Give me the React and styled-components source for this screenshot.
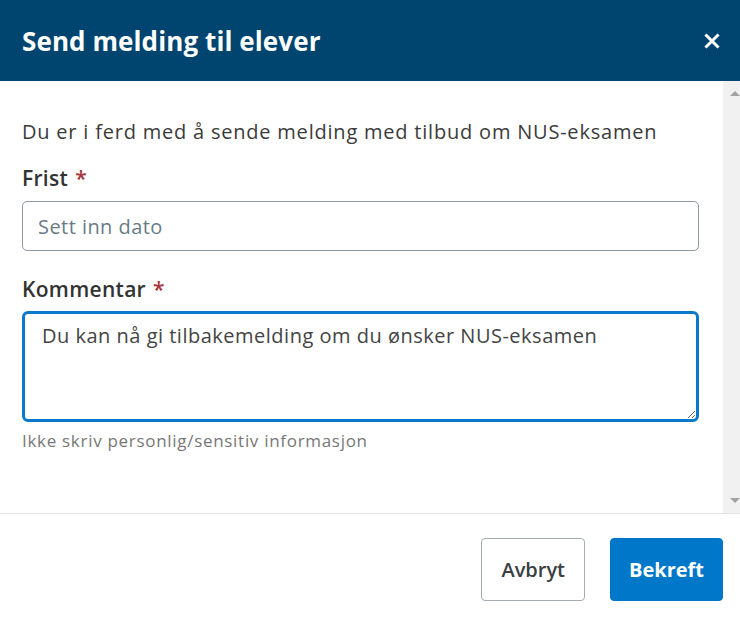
import styled, { createGlobalStyle } from 'styled-components';

const GlobalStyle = createGlobalStyle`
    html, body {
        margin: 0;
        padding: 0;
        height: 100%;
        background: #ffffff;
    }
    #root {
        height: 100%;
    }
    * {
        box-sizing: border-box;
    }
`;

const Dialog = styled.div`
    display: flex;
    flex-direction: column;
    width: 740px;
    height: 624px;
    background: #ffffff;
    font-family: 'Open Sans', 'Liberation Sans', sans-serif;
    color: #333333;
`;

const Header = styled.header`
    display: flex;
    align-items: center;
    justify-content: space-between;
    height: 81px;
    flex-shrink: 0;
    padding: 0 16px 0 22px;
    background-color: #00456f;
`;

const Title = styled.h1`
    margin: 0;
    font-size: 26px;
    font-weight: 700;
    line-height: 36px;
    color: #ffffff;
    letter-spacing: 0.1px;
`;

const CloseButton = styled.button`
    display: flex;
    align-items: center;
    justify-content: center;
    width: 24px;
    height: 24px;
    padding: 0;
    border: none;
    background: transparent;
    cursor: pointer;
`;

/* innhold + egen scrollbar-stripe */
const Body = styled.div`
    flex: 1;
    display: flex;
    min-height: 0;
`;

const Content = styled.div`
    flex: 1;
    display: flex;
    flex-direction: column;
    padding: 37px 24px 0 22px;
`;

const ScrollTrack = styled.div`
    display: flex;
    flex-direction: column;
    justify-content: space-between;
    align-items: flex-start;
    width: 17px;
    padding: 10px 0 10px 7px;
    background: #f1f1f1;
`;

const Arrow = styled.span`
    width: 0;
    height: 0;
    border-left: 5px solid transparent;
    border-right: 5px solid transparent;
    ${(p) => (p.$down ? 'border-top: 5px solid #a3a3a3;' : 'border-bottom: 5px solid #a3a3a3;')}
`;

const Intro = styled.p`
    margin: 0 0 18px;
    font-size: 20px;
    line-height: 28px;
    letter-spacing: 0.79px;
    color: #3b3b3b;
`;

const Field = styled.div`
    display: flex;
    flex-direction: column;
    margin-bottom: ${(p) => p.$gap || '0'};
`;

const Label = styled.label`
    margin-bottom: ${(p) => p.$gap || '9px'};
    font-size: 21px;
    font-weight: 600;
    line-height: 28px;
    letter-spacing: 0.3px;
    color: #333333;
`;

const Required = styled.span`
    margin-left: 7px;
    color: #a6363a;
`;

const TextInput = styled.input`
    width: 100%;
    height: 50px;
    padding: 0 15px;
    border: 1px solid #8d9aa5;
    border-radius: 5px;
    font-family: inherit;
    font-size: 20px;
    letter-spacing: 0.45px;
    color: #333333;
    background: #ffffff;
    outline: none;

    &::placeholder {
        color: #6a7b88;
    }
`;

const TextArea = styled.textarea`
    width: 100%;
    height: 111px;
    padding: 8px 17px;
    border: 3px solid #0a79cc;
    border-radius: 6px;
    font-family: inherit;
    font-size: 20px;
    line-height: 28px;
    letter-spacing: 0.5px;
    color: #444444;
    background: #ffffff;
    resize: vertical;
    outline: none;
`;

const Hint = styled.span`
    margin-top: 8px;
    font-size: 17px;
    line-height: 22px;
    letter-spacing: 0.7px;
    color: #777777;
`;

const Footer = styled.footer`
    display: flex;
    align-items: center;
    justify-content: flex-end;
    gap: 25px;
    height: 111px;
    flex-shrink: 0;
    padding: 0 17px 0 0;
    border-top: 1px solid #e4e4e4;
`;

const Button = styled.button`
    height: 63px;
    padding: 0 ${(p) => (p.$primary ? '18px' : '19px')};
    border: 1px solid ${(p) => (p.$primary ? '#0077c8' : '#a4adb4')};
    border-radius: 4px;
    background: ${(p) => (p.$primary ? '#0077c8' : '#ffffff')};
    color: ${(p) => (p.$primary ? '#ffffff' : '#3a3f44')};
    font-family: inherit;
    font-size: 20px;
    font-weight: ${(p) => (p.$primary ? 700 : 600)};
    cursor: pointer;
`;

const CloseIcon = () => (
    <svg width="16" height="16" viewBox="0 0 16 16">
        <path d="M2.5 2.5 L13.5 13.5 M13.5 2.5 L2.5 13.5" stroke="#ffffff" strokeWidth="3" strokeLinecap="square" />
    </svg>
);

const App = () => {
    return (
        <>
            <GlobalStyle />
            <Dialog>
                <Header>
                    <Title>Send melding til elever</Title>
                    <CloseButton aria-label="Lukk">
                        <CloseIcon />
                    </CloseButton>
                </Header>

                <Body>
                    <Content>
                        <Intro>Du er i ferd med å sende melding med tilbud om NUS-eksamen</Intro>

                        <Field $gap="24px">
                            <Label>Frist<Required>*</Required></Label>
                            <TextInput placeholder="Sett inn dato" />
                        </Field>

                        <Field>
                            <Label $gap="8px">Kommentar<Required>*</Required></Label>
                            <TextArea defaultValue="Du kan nå gi tilbakemelding om du ønsker NUS-eksamen" />
                            <Hint>Ikke skriv personlig/sensitiv informasjon</Hint>
                        </Field>
                    </Content>
                    <ScrollTrack>
                        <Arrow />
                        <Arrow $down />
                    </ScrollTrack>
                </Body>

                <Footer>
                    <Button>Avbryt</Button>
                    <Button $primary>Bekreft</Button>
                </Footer>
            </Dialog>
        </>
    );
};

export default App;
